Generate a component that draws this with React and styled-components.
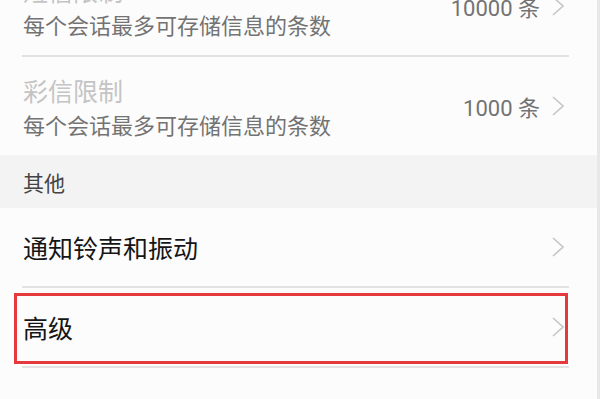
import React from "react";
import styled, { createGlobalStyle } from "styled-components";

const Global = createGlobalStyle`
  html, body { margin: 0; padding: 0; background: #fcfcfc; }
  body { font-family: Roboto, "Noto Sans CJK SC", "Noto Sans", sans-serif; }
`;

const Page = styled.div`
  width: 600px;
  height: 399px;
  box-sizing: border-box;
  overflow: hidden;
  background: #fcfcfc;
  border-right: 3px solid #e8e8e8;
`;

const List = styled.div`
  display: flex;
  flex-direction: column;
  margin-top: -43px;
`;

const Row = styled.div`
  position: relative;
  display: flex;
  align-items: center;
  height: ${(p) => p.$h}px;
  padding: 0 33px 0 23px;
  box-sizing: border-box;
`;

const TextCol = styled.div`
  flex: 1;
  display: flex;
  flex-direction: column;
  gap: 2px;
`;

const Title = styled.div`
  font-family: "Noto Sans CJK SC", sans-serif;
  font-size: 25px;
  line-height: 33px;
  color: ${(p) => (p.$disabled ? "#c4c4c4" : "#151515")};
`;

const Sub = styled.div`
  font-family: "Noto Sans CJK SC", sans-serif;
  font-size: 22px;
  line-height: 30px;
  color: #737373;
`;

const Value = styled.div`
  font-family: Roboto, "Noto Sans CJK SC", sans-serif;
  font-size: 22px;
  color: #737373;
  margin-right: 12px;
`;

const Divider = styled.div`
  height: 2px;
  margin: 0 28px 0 22px;
  background: #e2e2e2;
`;

const SectionHeader = styled.div`
  height: 53px;
  display: flex;
  align-items: center;
  padding-left: 23px;
  background: #f3f3f3;
  font-family: "Noto Sans CJK SC", sans-serif;
  font-size: 21px;
  color: #444;
`;

const Highlight = styled.div`
  position: absolute;
  left: 14px;
  top: 5px;
  width: 554px;
  height: 71px;
  box-sizing: border-box;
  border: 3px solid #e5393d;
  pointer-events: none;
`;

const Chevron = () => (
  <svg width="12" height="20" viewBox="0 0 12 20">
    <polyline
      points="1,1 11,10 1,19"
      fill="none"
      stroke="#c6c6c6"
      strokeWidth="1.6"
    />
  </svg>
);

export default function App() {
  return (
    <Page>
      <Global />
      <List>
        <Row $h={98}>
          <TextCol>
            <Title $disabled>短信限制</Title>
            <Sub>每个会话最多可存储信息的条数</Sub>
          </TextCol>
          <Value>10000 条</Value>
          <Chevron />
        </Row>
        <Divider />
        <Row $h={98}>
          <TextCol>
            <Title $disabled>彩信限制</Title>
            <Sub>每个会话最多可存储信息的条数</Sub>
          </TextCol>
          <Value>1000 条</Value>
          <Chevron />
        </Row>
        <SectionHeader>其他</SectionHeader>
        <Row $h={78}>
          <TextCol>
            <Title>通知铃声和振动</Title>
          </TextCol>
          <Chevron />
        </Row>
        <Divider />
        <Row $h={78}>
          <TextCol>
            <Title>高级</Title>
          </TextCol>
          <Chevron />
          <Highlight />
        </Row>
        <Divider />
      </List>
    </Page>
  );
}
